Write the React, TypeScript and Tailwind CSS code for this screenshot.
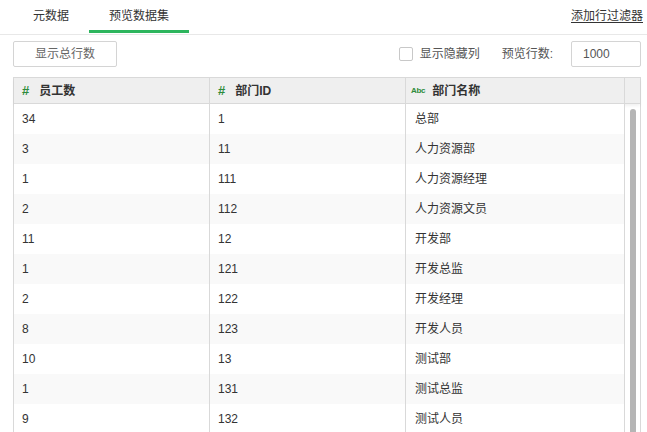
import React from 'react';

const rows: [string, string, string][] = [
  ['34', '1', '总部'],
  ['3', '11', '人力资源部'],
  ['1', '111', '人力资源经理'],
  ['2', '112', '人力资源文员'],
  ['11', '12', '开发部'],
  ['1', '121', '开发总监'],
  ['2', '122', '开发经理'],
  ['8', '123', '开发人员'],
  ['10', '13', '测试部'],
  ['1', '131', '测试总监'],
  ['9', '132', '测试人员'],
];

function NumIcon() {
  return <span className="text-[13px] font-bold text-[#2e8b3a] mr-[10px] leading-none">#</span>;
}

function AbcIcon() {
  return <span className="text-[8px] text-[#2e8b3a] mr-[7px] leading-none tracking-[-0.3px]">Abc</span>;
}

export default function App() {
  return (
    <div
      className="h-screen w-full overflow-hidden bg-white text-[12px] text-[#333]"
      style={{ fontFamily: '"Liberation Sans", "Noto Sans CJK SC", sans-serif' }}
    >
      {/* tabs */}
      <div className="flex h-[35px] items-stretch justify-between border-b border-[#e8e8e8] pl-[13px] pr-[4px]">
        <div className="flex">
          <div className="flex items-center px-5 pb-[3px] text-[#333]">元数据</div>
          <div className="relative flex items-center px-5 pb-[3px] text-[#333]">
            预览数据集
            <div className="absolute bottom-[1px] left-0 right-0 h-[3px] bg-[#2db55d]" />
          </div>
        </div>
        <div className="flex items-center pb-[3px]">
          <span className="underline underline-offset-2 text-[#333]">添加行过滤器</span>
        </div>
      </div>

      {/* toolbar */}
      <div className="flex items-center justify-between pl-[13px] pr-[6px] pt-[6px]">
        <button className="flex h-[26px] w-[104px] items-center justify-center rounded-[2px] border border-[#d4d4d4] bg-white text-[#666]">
          显示总行数
        </button>
        <div className="flex items-center">
          <div className="h-[14px] w-[14px] rounded-[2px] border border-[#c8c8c8] bg-white" />
          <span className="ml-[7px] text-[#555]">显示隐藏列</span>
          <span className="ml-[22px] text-[#555]">预览行数:</span>
          <div className="ml-[18px] flex h-[26px] w-[70px] items-center rounded-[2px] border border-[#d4d4d4] pl-[11px] text-[#555]">
            1000
          </div>
        </div>
      </div>

      {/* table */}
      <div className="ml-[13px] mt-[10px] w-[628px] border border-[#d9d9d9]">
        <div className="flex h-[26px] border-b border-[#d9d9d9] bg-[#efefef] font-bold shadow-[0_2px_3px_rgba(0,0,0,0.06)]">
          <div className="flex w-[196px] items-center border-r border-[#d9d9d9] pl-[8px]">
            <NumIcon />
            员工数
          </div>
          <div className="flex w-[196px] items-center border-r border-[#d9d9d9] pl-[8px]">
            <NumIcon />
            部门ID
          </div>
          <div className="flex w-[219px] items-center border-r border-[#d9d9d9] pl-[5px]">
            <AbcIcon />
            部门名称
          </div>
          <div className="flex-1" />
        </div>
        <div className="flex">
          <div className="w-[611px] border-r border-[#d9d9d9]">
            {rows.map((r, i) => (
              <div key={i} className={`flex h-[30px] ${i % 2 === 1 ? 'bg-[#f9f9f9]' : 'bg-white'}`}>
                <div className="flex w-[196px] items-center border-r border-[#d9d9d9] pl-[8px]">{r[0]}</div>
                <div className="flex w-[196px] items-center border-r border-[#d9d9d9] pl-[8px]">{r[1]}</div>
                <div className="flex flex-1 items-center pl-[9px]">{r[2]}</div>
              </div>
            ))}
          </div>
          <div className="flex flex-1 justify-center pt-[5px]">
            <div className="h-[400px] w-[6px] rounded-t-[3px] bg-[#b5b5b5]" />
          </div>
        </div>
      </div>
    </div>
  );
}
